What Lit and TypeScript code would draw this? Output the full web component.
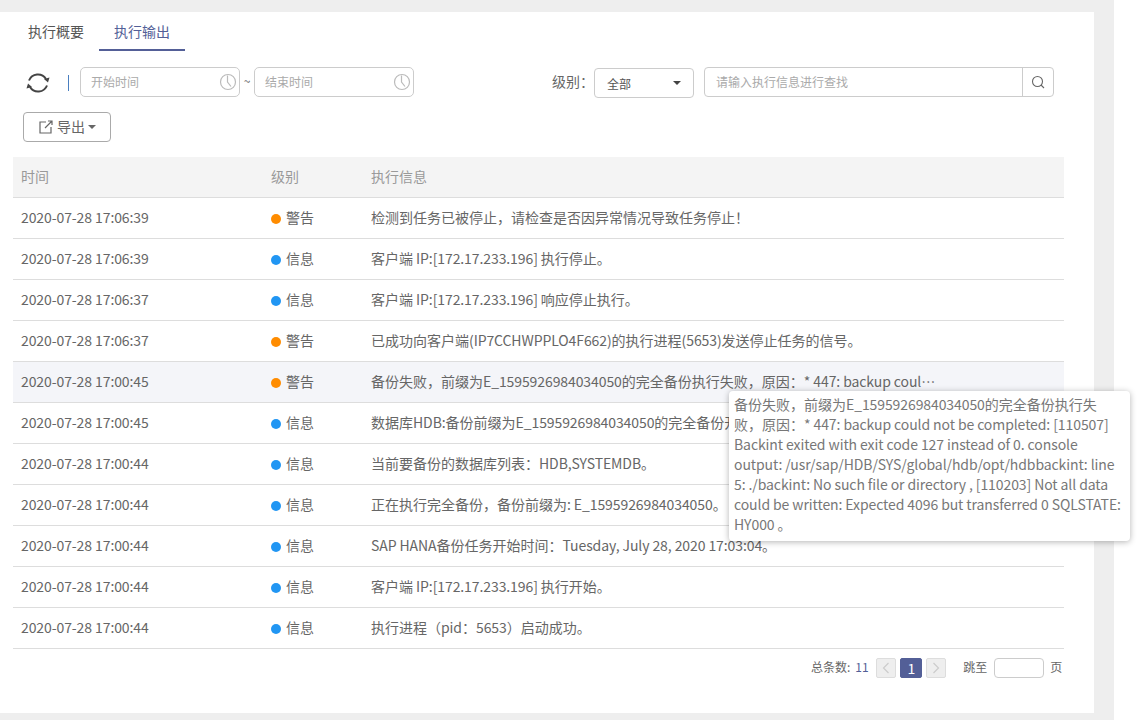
import { LitElement, html, css, svg } from 'lit';
import { customElement } from 'lit/decorators.js';

const WARN = '警告';
const INFO = '信息';

const rows = [
    ['2020-07-28 17:06:39', WARN, '检测到任务已被停止，请检查是否因异常情况导致任务停止！'],
    ['2020-07-28 17:06:39', INFO, '客户端 IP:[172.17.233.196] 执行停止。'],
    ['2020-07-28 17:06:37', INFO, '客户端 IP:[172.17.233.196] 响应停止执行。'],
    ['2020-07-28 17:06:37', WARN, '已成功向客户端(IP7CCHWPPLO4F662)的执行进程(5653)发送停止任务的信号。'],
    ['2020-07-28 17:00:45', WARN, '备份失败，前缀为E_1595926984034050的完全备份执行失败，原因：* 447: backup could not be completed: [110507] Backint exited with exit code 127'],
    ['2020-07-28 17:00:45', INFO, '数据库HDB:备份前缀为E_1595926984034050的完全备份开始执行。'],
    ['2020-07-28 17:00:44', INFO, '当前要备份的数据库列表：HDB,SYSTEMDB。'],
    ['2020-07-28 17:00:44', INFO, '正在执行完全备份，备份前缀为: E_1595926984034050。'],
    ['2020-07-28 17:00:44', INFO, 'SAP HANA备份任务开始时间：Tuesday, July 28, 2020 17:03:04。'],
    ['2020-07-28 17:00:44', INFO, '客户端 IP:[172.17.233.196] 执行开始。'],
    ['2020-07-28 17:00:44', INFO, '执行进程（pid：5653）启动成功。'],
];

const tip = '备份失败，前缀为E_1595926984034050的完全备份执行失败，原因：* 447: backup could not be completed: [110507] Backint exited with exit code 127 instead of 0. console output: /usr/sap/HDB/SYS/global/hdb/opt/hdbbackint: line 5: ./backint: No such file or directory , [110203] Not all data could be written: Expected 4096 but transferred 0 SQLSTATE: HY000 。';

// latin runs sit a little tighter than the cjk font's own metrics
const latin = (text: string) =>
    text.split(/([\x21-\x7e ]+)/).map((part, i) => i % 2 ? html`<span class="lat">${part}</span>` : part);

const clock = svg`<circle cx="9" cy="9" r="7.5" fill="none" stroke="#bbb" stroke-width="1.2"/><path d="M8.5 2.5V9l3.5 4.5" fill="none" stroke="#bbb" stroke-width="1.2"/>`;

@customElement('app-root')
export class AppRoot extends LitElement {

    static styles = css`
        :host {
            background-color: #fff;
            color: #666;
            display: flex;
            font-family: "Noto Sans CJK SC", "Noto Sans", sans-serif;
            font-size: 14px;
            height: 720px;
            overflow: hidden;
            position: relative;
            width: 1138px;
        }

        .lat {
            letter-spacing: -0.09px;
        }

        .shell {
            background-color: #eee;
            box-sizing: border-box;
            height: 720px;
            padding: 12px 20px 7px 0;
            width: 1114px;
        }

        .panel {
            background-color: #fff;
            height: 701px;
            width: 1094px;
        }

        .tabs {
            display: flex;
            height: 39px;
            padding-left: 13px;
        }

        .tab {
            box-sizing: border-box;
            color: #555;
            height: 39px;
            line-height: 38px;
            text-align: center;
            width: 86px;
        }

        .tab.active {
            border-bottom: 2px solid #535f97;
            color: #535f97;
        }

        .toolbar {
            align-items: flex-start;
            display: flex;
            height: 31px;
            margin-top: 16px;
            padding-left: 26px;
        }

        .refresh {
            display: block;
            height: 24px;
            margin-top: 4px;
            width: 24px;
        }

        .sep {
            background-color: #4a7fc0;
            height: 16px;
            margin: 8px 11px 0 18px;
            width: 1px;
        }

        .date {
            align-items: center;
            border: 1px solid #ccc;
            border-radius: 5px;
            box-sizing: border-box;
            display: flex;
            height: 30px;
            justify-content: space-between;
            padding: 0 2px 0 10px;
            width: 160px;
        }

        input {
            background: none;
            border: 0;
            color: #666;
            font: inherit;
            font-size: 12px;
            height: 26px;
            min-width: 0;
            outline: none;
            padding: 0 0 2px;
        }

        input::placeholder {
            color: #aaa;
            opacity: 1;
        }

        .date input {
            width: 120px;
        }

        .date svg {
            height: 18px;
            width: 18px;
        }

        .tilde {
            font-size: 12px;
            line-height: 28px;
            text-align: center;
            width: 14px;
        }

        .level-label {
            line-height: 28px;
            margin-left: 138px;
            width: 42px;
        }

        .select {
            align-items: center;
            border: 1px solid #ccc;
            border-radius: 4px;
            box-sizing: border-box;
            color: #555;
            display: flex;
            font-size: 12px;
            height: 30px;
            justify-content: space-between;
            margin-top: 1px;
            padding: 0 12px;
            width: 100px;
        }

        .caret {
            border-left: 4px solid transparent;
            border-right: 4px solid transparent;
            border-top: 4px solid #444;
            height: 0;
            width: 0;
        }

        .search {
            align-items: flex-start;
            border: 1px solid #ccc;
            border-radius: 4px;
            box-sizing: border-box;
            display: flex;
            height: 30px;
            margin-left: 10px;
            width: 350px;
        }

        .search input {
            flex: 1;
            padding-left: 11px;
        }

        .search-btn {
            align-items: center;
            border-left: 1px solid #ccc;
            display: flex;
            height: 28px;
            justify-content: center;
            width: 30px;
        }

        .export {
            align-items: center;
            border: 1px solid #aaa;
            border-radius: 4px;
            box-sizing: border-box;
            display: flex;
            gap: 3px;
            height: 30px;
            justify-content: center;
            margin: 14px 0 15px 23px;
            width: 88px;
        }

        .export span:nth-of-type(1) {
            line-height: 26px;
            padding-bottom: 2px;
        }

        .export .caret {
            border-top-color: #666;
        }

        table {
            border-collapse: collapse;
            margin-left: 13px;
            table-layout: fixed;
            width: 1051px;
        }

        th {
            background-color: #f4f4f4;
            border-bottom: 1px solid #ddd;
            color: #999;
            font-weight: 400;
            height: 38px;
            padding: 0 8px 2px;
            text-align: left;
        }

        td {
            border-bottom: 1px solid #ddd;
            height: 38px;
            overflow: hidden;
            padding: 0 8px 2px;
            text-overflow: ellipsis;
            white-space: nowrap;
        }

        tr.hover td {
            background-color: #f4f5f9;
        }

        td.msg div {
            max-width: 566px;
            overflow: hidden;
            text-overflow: ellipsis;
        }

        .dot {
            border-radius: 50%;
            display: inline-block;
            height: 10px;
            margin-right: 5px;
            vertical-align: -1px;
            width: 10px;
        }

        .dot.warn {
            background-color: #ff8c00;
        }

        .dot.info {
            background-color: #2196f3;
        }

        .pager {
            align-items: flex-start;
            display: flex;
            font-size: 12px;
            height: 20px;
            line-height: 18px;
            margin-top: 9px;
            padding-left: 811px;
        }

        .total {
            color: #535f97;
            margin-left: 5px;
            width: 21px;
        }

        .page {
            align-items: center;
            background-color: #eee;
            border: 1px solid #ddd;
            border-radius: 2px;
            box-sizing: border-box;
            display: flex;
            height: 20px;
            justify-content: center;
            margin-right: 4px;
            width: 20px;
        }

        .page.current {
            background-color: #535f97;
            border-color: #535f97;
            color: #fff;
            font-size: 14px;
            width: 22px;
        }

        .jump {
            margin-left: 13px;
        }

        .jump-input {
            border: 1px solid #ccc;
            border-radius: 4px;
            box-sizing: border-box;
            height: 20px;
            margin: 0 6px 0 7px;
            width: 50px;
        }

        .tooltip {
            background-color: #fff;
            border-radius: 4px;
            box-shadow: 0 1px 6px rgba(0, 0, 0, 0.3);
            box-sizing: border-box;
            color: #777;
            left: 729px;
            line-height: 20px;
            padding: 3px 7px 7px 5px;
            position: absolute;
            top: 391px;
            width: 401px;
        }
    `;

    renderRow(row: string[], i: number) {
        const warn = row[1] === WARN;
        return html`
            <tr class="${i === 4 ? 'hover' : ''}">
                <td class="lat">${row[0]}</td>
                <td><span class="dot ${warn ? 'warn' : 'info'}"></span>${row[1]}</td>
                <td class="msg"><div>${latin(row[2])}</div></td>
            </tr>
        `;
    }

    render() {
        return html`
            <div class="shell">
                <div class="panel">
                    <div class="tabs">
                        <div class="tab">执行概要</div>
                        <div class="tab active">执行输出</div>
                    </div>
                    <div class="toolbar">
                        <svg class="refresh" viewBox="0 0 24 24" fill="none" stroke="#444" stroke-width="2">
                            <path d="M3 9.5A9.5 9.5 0 0 1 20 8"/>
                            <path d="M21 14.5A9.5 9.5 0 0 1 4 16"/>
                            <path d="M23.5 6.5l-1.5 5-4-3.5z" fill="#444" stroke="none"/>
                            <path d="M.5 17.5l1.5-5 4 3.5z" fill="#444" stroke="none"/>
                        </svg>
                        <div class="sep"></div>
                        <div class="date">
                            <input placeholder="开始时间">
                            <svg viewBox="0 0 18 18">${clock}</svg>
                        </div>
                        <div class="tilde">~</div>
                        <div class="date">
                            <input placeholder="结束时间">
                            <svg viewBox="0 0 18 18">${clock}</svg>
                        </div>
                        <div class="level-label">级别：</div>
                        <div class="select"><span>全部</span><span class="caret"></span></div>
                        <div class="search">
                            <input placeholder="请输入执行信息进行查找">
                            <div class="search-btn">
                                <svg width="14" height="14" viewBox="0 0 14 14" fill="none" stroke="#666" stroke-width="1.1">
                                    <circle cx="6.5" cy="6.5" r="5"/>
                                    <path d="M10 10l3 3"/>
                                </svg>
                            </div>
                        </div>
                    </div>
                    <div class="export">
                        <svg width="16" height="16" viewBox="0 0 16 16" fill="none" stroke="#666" stroke-width="1.2">
                            <path d="M8 3H2v11h11V8"/>
                            <path d="M7 9l7-7M10 2h4v4"/>
                        </svg>
                        <span>导出</span>
                        <span class="caret"></span>
                    </div>
                    <table>
                        <colgroup>
                            <col style="width:250px">
                            <col style="width:100px">
                            <col>
                        </colgroup>
                        <thead>
                            <tr><th>时间</th><th>级别</th><th>执行信息</th></tr>
                        </thead>
                        <tbody>
                            ${rows.map((row, i) => this.renderRow(row, i))}
                        </tbody>
                    </table>
                    <div class="pager">
                        <span>总条数:</span>
                        <span class="total">11</span>
                        <span class="page">
                            <svg width="8" height="12" viewBox="0 0 8 12" fill="none" stroke="#ccc" stroke-width="1.2"><path d="M6.5 1L1.5 6l5 5"/></svg>
                        </span>
                        <span class="page current">1</span>
                        <span class="page">
                            <svg width="8" height="12" viewBox="0 0 8 12" fill="none" stroke="#ccc" stroke-width="1.2"><path d="M1.5 1l5 5-5 5"/></svg>
                        </span>
                        <span class="jump">跳至</span>
                        <span class="jump-input"></span>
                        <span>页</span>
                    </div>
                </div>
            </div>
            <div class="tooltip">${latin(tip)}</div>
        `;
    }
}
